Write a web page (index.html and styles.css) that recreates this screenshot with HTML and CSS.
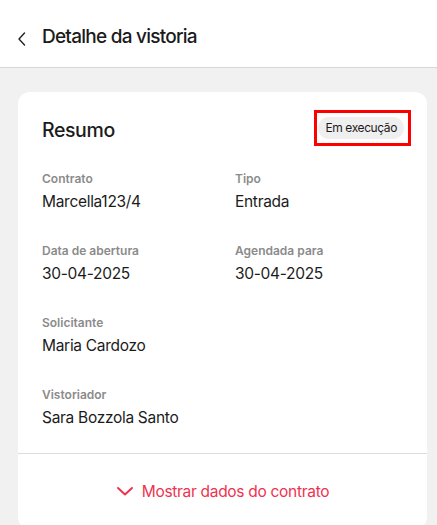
FILE: index.html
```html
<!DOCTYPE html>
<html lang="pt">
<head>
    <meta charset="UTF-8">
    <title>Detalhe da vistoria</title>
    <link rel="stylesheet" href="styles.css">
</head>
<body>
    <header class="topbar">
        <button class="back-button" aria-label="Voltar">
            <svg width="10" height="16" viewBox="0 0 10 16"><path d="M7.5 2 L2 8 L7.5 14" fill="none" stroke="#222" stroke-width="1.4" stroke-linecap="round" stroke-linejoin="round"/></svg>
        </button>
        <h1>Detalhe da vistoria</h1>
    </header>

    <main class="content">
        <section class="card">
            <div class="card-body">
                <div class="card-head">
                    <h2>Resumo</h2>
                    <div class="highlight">
                        <span class="badge">Em execução</span>
                    </div>
                </div>

                <div class="fields">
                    <div class="field">
                        <span class="label">Contrato</span>
                        <span class="value">Marcella123/4</span>
                    </div>
                    <div class="field">
                        <span class="label">Tipo</span>
                        <span class="value">Entrada</span>
                    </div>
                    <div class="field">
                        <span class="label">Data de abertura</span>
                        <span class="value">30-04-2025</span>
                    </div>
                    <div class="field">
                        <span class="label">Agendada para</span>
                        <span class="value">30-04-2025</span>
                    </div>
                    <div class="field">
                        <span class="label">Solicitante</span>
                        <span class="value">Maria Cardozo</span>
                    </div>
                    <div class="field"></div>
                    <div class="field">
                        <span class="label">Vistoriador</span>
                        <span class="value">Sara Bozzola Santo</span>
                    </div>
                </div>
            </div>

            <button class="toggle">
                <svg width="18" height="10" viewBox="0 0 18 10"><path d="M2 2 L9 8.5 L16 2" fill="none" stroke="#ee3350" stroke-width="2" stroke-linecap="round" stroke-linejoin="round"/></svg>
                Mostrar dados do contrato
            </button>
        </section>
    </main>
</body>
</html>
```

FILE: styles.css
```css
* {
    box-sizing: border-box;
}
body {
    margin: 0;
    background: #f1f1f1;
    font-family: Inter, "Noto Sans", sans-serif;
    color: #1b1b1b;
}
.topbar {
    height: 68px;
    background: #fff;
    border-bottom: 1px solid #d6d6d6;
    display: flex;
    align-items: center;
    padding-left: 17px;
    padding-top: 6px;
}
.back-button {
    background: none;
    border: none;
    padding: 0;
    width: 25px;
    display: flex;
    align-items: center;
    margin-top: 4px;
}
.topbar h1 {
    margin: 0;
    font-size: 19px;
    font-weight: 500;
    letter-spacing: -0.75px;
    color: #1b1b1b;
}
.content {
    padding: 24px 10px 0 18px;
}
.card {
    background: #fff;
    border-radius: 12px;
}
.card-body {
    padding: 18px 24px 20px 24px;
}
.card-head {
    display: flex;
    align-items: center;
    justify-content: space-between;
    margin-bottom: 25px;
}
.card-head h2 {
    margin: 4px 0 0;
    font-size: 19.5px;
    font-weight: 500;
    letter-spacing: -0.4px;
}
.highlight {
    border: 3px solid #ff0000;
    padding: 4px 4px 4px 1px;
    margin-right: -8px;
}
.badge {
    display: block;
    background: #efefef;
    border-radius: 11px;
    padding: 3px 7px;
    font-size: 12px;
    letter-spacing: -0.4px;
    line-height: 16px;
}
.fields {
    display: grid;
    grid-template-columns: 193px 1fr;
    row-gap: 26px;
}
.field {
    display: flex;
    flex-direction: column;
    gap: 4px;
    min-height: 46px;
}
.label {
    font-size: 12px;
    font-weight: 600;
    color: #8b8b8b;
    line-height: 16px;
}
.value {
    font-size: 15.5px;
    letter-spacing: -0.3px;
    line-height: 22px;
}
.toggle {
    width: 100%;
    border: none;
    border-top: 1px solid #dcdcdc;
    background: none;
    height: 76px;
    display: flex;
    align-items: center;
    justify-content: center;
    gap: 8px;
    font-family: inherit;
    font-size: 15.5px;
    letter-spacing: -0.3px;
    color: #ee3350;
    padding-bottom: 2px;
}
```
